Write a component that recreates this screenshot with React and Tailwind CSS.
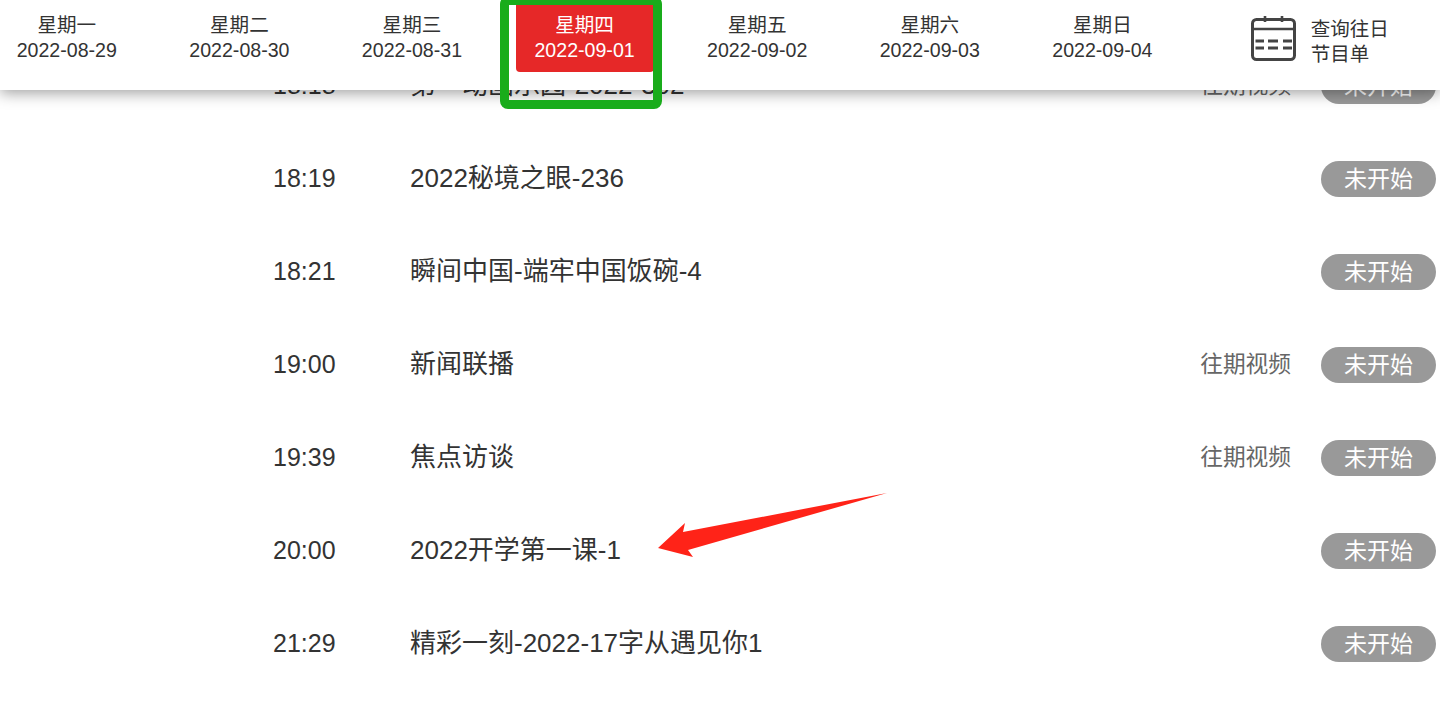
import React from "react";

const days = [
  { week: "星期一", date: "2022-08-29" },
  { week: "星期二", date: "2022-08-30" },
  { week: "星期三", date: "2022-08-31" },
  { week: "星期四", date: "2022-09-01", active: true },
  { week: "星期五", date: "2022-09-02" },
  { week: "星期六", date: "2022-09-03" },
  { week: "星期日", date: "2022-09-04" },
];

const programs = [
  { time: "18:18", title: "第一动画乐园-2022-302", replay: true },
  { time: "18:19", title: "2022秘境之眼-236" },
  { time: "18:21", title: "瞬间中国-端牢中国饭碗-4" },
  { time: "19:00", title: "新闻联播", replay: true },
  { time: "19:39", title: "焦点访谈", replay: true },
  { time: "20:00", title: "2022开学第一课-1" },
  { time: "21:29", title: "精彩一刻-2022-17字从遇见你1" },
];

const CalendarIcon = () => (
  <svg width="46" height="46" viewBox="0 0 46 46" fill="none" stroke="#444" className="shrink-0">
    <rect x="1.5" y="3.500" width="42" height="40" rx="4" strokeWidth="3" />
    <path d="M1.500 13H43.500" strokeWidth="2.4" />
    <path d="M14 0V6M31 0V6" strokeWidth="2.6" />
    <path d="M4.500 25H13M17 25H27M32 25H41M4.500 32H13M17 32H27M32 32H41" strokeWidth="2.8" />
  </svg>
);

export default function App() {
  return (
    <div className="relative h-[714px] w-full overflow-hidden bg-white font-['Liberation_Sans','Noto_Sans_CJK_SC',sans-serif] text-[#333]">
      <header className="absolute inset-x-0 top-0 z-10 flex h-[90px] bg-white shadow-[0_3px_14px_rgba(0,0,0,0.38)]">
        <ul className="-ml-[19.5px] flex">
          {days.map((d) => (
            <li key={d.date} className="w-[172.6px]">
              <a
                className={`mx-auto block h-[72px] w-[138px] rounded-b-[4px] pt-[13px] text-center text-[19.6px] leading-[25px] ${
                  d.active ? "bg-[#e62828] text-white" : ""
                }`}
              >
                <p>{d.week}</p>
                <p>{d.date}</p>
              </a>
            </li>
          ))}
        </ul>
        <div className="ml-[62px] flex items-start pt-[16px]">
          <CalendarIcon />
          <p className="ml-[14px] w-[80px] pt-[1px] text-[19.5px] leading-[25px]">查询往日节目单</p>
        </div>
      </header>

      <ul className="pt-[39px]">
        {programs.map((p) => (
          <li key={p.time} className="flex h-[93px] items-center pr-[4px] pl-[273px]">
            <span className="w-[137px] text-[25px]">{p.time}</span>
            <span className="flex-1 text-[26px] text-[#333]">{p.title}</span>
            {p.replay && <span className="mr-[30px] text-[22.7px] text-[#666]">往期视频</span>}
            <span className="flex h-[36px] w-[115px] items-center justify-center rounded-full bg-[#999] pt-[2px] text-[23px] text-white">
              未开始
            </span>
          </li>
        ))}
      </ul>

      {/* annotations on top of the screenshot */}
      <div className="absolute top-[-4px] left-[500px] z-20 h-[113px] w-[162px] rounded-[8px] border-[9px] border-[#19ac1b]" />
      <svg className="absolute top-[490px] left-[655px] z-20" width="236" height="72" viewBox="0 0 236 72">
        <path d="M232 3L28 42L30 33L3 58L38 67L33 60Z" fill="#ff2318" />
      </svg>
    </div>
  );
}
